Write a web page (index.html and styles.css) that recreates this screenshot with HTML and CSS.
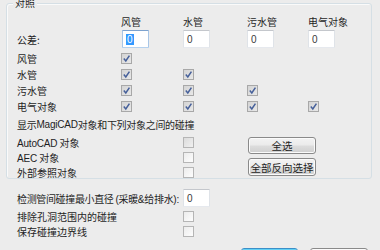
FILE: index.html
```html
<!DOCTYPE html>
<html lang="zh">
<head>
<meta charset="utf-8">
<link rel="stylesheet" href="styles.css">
</head>
<body>
<div class="group">
  <div class="legend">对照</div>
  <div class="row head">
    <span class="lab"></span><span class="c1">风管</span><span class="c2">水管</span><span class="c3">污水管</span><span class="c4">电气对象</span>
  </div>
  <div class="row inp">
    <span class="lab">公差:</span>
    <span class="c1"><span class="tb focus"><span class="sel">0</span></span></span>
    <span class="c2"><span class="tb">0</span></span>
    <span class="c3"><span class="tb">0</span></span>
    <span class="c4"><span class="tb">0</span></span>
  </div>
  <div class="row cbr">
    <span class="lab">风管</span>
    <span class="c1"><span class="cb on"><svg viewBox="0 0 9 9"><path d="M1.8 4.6 L3.8 7 L7.4 1.6"/></svg></span></span>
  </div>
  <div class="row cbr">
    <span class="lab">水管</span>
    <span class="c1"><span class="cb on"><svg viewBox="0 0 9 9"><path d="M1.8 4.6 L3.8 7 L7.4 1.6"/></svg></span></span>
    <span class="c2"><span class="cb on"><svg viewBox="0 0 9 9"><path d="M1.8 4.6 L3.8 7 L7.4 1.6"/></svg></span></span>
  </div>
  <div class="row cbr">
    <span class="lab">污水管</span>
    <span class="c1"><span class="cb on"><svg viewBox="0 0 9 9"><path d="M1.8 4.6 L3.8 7 L7.4 1.6"/></svg></span></span>
    <span class="c2"><span class="cb on"><svg viewBox="0 0 9 9"><path d="M1.8 4.6 L3.8 7 L7.4 1.6"/></svg></span></span>
    <span class="c3"><span class="cb on"><svg viewBox="0 0 9 9"><path d="M1.8 4.6 L3.8 7 L7.4 1.6"/></svg></span></span>
  </div>
  <div class="row cbr">
    <span class="lab">电气对象</span>
    <span class="c1"><span class="cb on"><svg viewBox="0 0 9 9"><path d="M1.8 4.6 L3.8 7 L7.4 1.6"/></svg></span></span>
    <span class="c2"><span class="cb on"><svg viewBox="0 0 9 9"><path d="M1.8 4.6 L3.8 7 L7.4 1.6"/></svg></span></span>
    <span class="c3"><span class="cb on"><svg viewBox="0 0 9 9"><path d="M1.8 4.6 L3.8 7 L7.4 1.6"/></svg></span></span>
    <span class="c4"><span class="cb on"><svg viewBox="0 0 9 9"><path d="M1.8 4.6 L3.8 7 L7.4 1.6"/></svg></span></span>
  </div>
  <div class="row show">显示<span class="lat">MagiCAD</span>对象和下列对象之间的碰撞</div>
  <div class="lower">
    <div class="lcol">
      <div class="lrow"><span class="lab2"><span class="lat">AutoCAD</span> 对象</span><span class="cb hot"></span></div>
      <div class="lrow"><span class="lab2"><span class="lat">AEC</span> 对象</span><span class="cb"></span></div>
      <div class="lrow"><span class="lab2">外部参照对象</span><span class="cb"></span></div>
    </div>
    <div class="bcol">
      <div class="btn b1">全选</div>
      <div class="btn b2">全部反向选择</div>
    </div>
  </div>
</div>
<div class="bottom">
  <div class="brow first"><span class="lab2 tight">检测管间碰撞最小直径 <span class="lat">(</span>采暖<span class="lat">&amp;</span>给排水<span class="lat">):</span></span><span class="tb">0</span></div>
  <div class="brow"><span class="lab2">排除孔洞范围内的碰撞</span><span class="cb"></span></div>
  <div class="brow"><span class="lab2">保存碰撞边界线</span><span class="cb"></span></div>
</div>
<div class="actions">
  <div class="btn act def"></div>
  <div class="btn act"></div>
</div>
</body>
</html>
```
FILE: styles.css
```css
html, body {
  margin: 0;
  padding: 0;
  width: 380px;
  height: 250px;
  overflow: hidden;
  background: #ececec;
  font-family: "Noto Sans CJK SC", "Noto Sans", sans-serif;
  font-size: 10px;
  color: #1e1e1e;
  white-space: nowrap;
}
.lat {
  font-family: "Liberation Sans", "Noto Sans CJK SC", sans-serif;
  letter-spacing: -0.2px;
}
.group {
  box-sizing: border-box;
  margin: 3px 0 0 6px;
  width: 366px;
  height: 176px;
  border: 1px solid #d5dfe5;
  border-radius: 3px;
  box-shadow: inset 1px 1px 0 #fafafa;
  padding-left: 10px;
}
.legend {
  width: fit-content;
  margin: -7px 0 0 -4px;
  padding: 0 2px;
  height: 12px;
  line-height: 12px;
  background: #ececec;
}
.row {
  display: flex;
  align-items: center;
}
.lab { width: 104px; flex: none; }
.c1 { width: 62px; flex: none; }
.c2 { width: 64px; flex: none; }
.c3 { width: 61px; flex: none; }
.c4 { width: 50px; flex: none; }
.head { margin-top: 6px; height: 14px; line-height: 14px; }
.inp { margin-top: 1px; height: 18px; }
.inp .c1 .tb { margin-left: 1px; }
.cbr { height: 16px; }
.cbr:nth-of-type(4) { margin-top: 2px; }
.show { margin-top: 3px; height: 16px; line-height: 16px; letter-spacing: -0.3px; }
.tb {
  box-sizing: border-box;
  display: flex;
  align-items: center;
  width: 27px;
  height: 18px;
  padding-left: 3px;
  background: #fff;
  border: 1px solid;
  border-color: #c4c7cc #dfe3e8 #e6e9ee #dfe3e8;
  border-radius: 1px;
  font-family: "Liberation Sans", sans-serif;
  font-size: 10px;
  color: #3a3a3a;
  flex: none;
}
.tb.focus { border-color: #7da2ce #a9c6e6 #b5d1ee #a9c6e6; }
.sel {
  background: #3399ff;
  color: #fff;
  padding: 0 1px;
  line-height: 11px;
}
.cb {
  box-sizing: border-box;
  display: inline-flex;
  align-items: center;
  justify-content: center;
  width: 11px;
  height: 11px;
  border: 1px solid #b5b5b5;
  background: linear-gradient(135deg, #ececec, #fdfdfd);
  flex: none;
}
.cb.on { background: linear-gradient(135deg, #d4d4d4, #e8e8e8); border-color: #a8a8a8; }
.cb.hot { background: linear-gradient(135deg, #dcdcdc, #f0f0f0); }
.cb svg { width: 9px; height: 9px; }
.cb svg path {
  fill: none;
  stroke: #46609a;
  stroke-width: 1.5;
}
.lower {
  display: flex;
  margin-top: 2px;
}
.lcol { display: flex; flex-direction: column; }
.lrow, .brow {
  display: flex;
  align-items: center;
  height: 15px;
}
.lab2 { width: 166px; flex: none; }
.tight { letter-spacing: -0.35px; }
.bcol {
  margin-left: 54px;
  padding-top: 2px;
  display: flex;
  flex-direction: column;
  gap: 4px;
}
.btn {
  box-sizing: border-box;
  width: 68px;
  height: 17px;
  border: 1px solid #8a8a8a;
  border-radius: 3px;
  background: linear-gradient(#f3f3f3 0%, #ebebeb 48%, #dddddd 52%, #cfcfcf 100%);
  box-shadow: inset 0 0 0 1px #fbfbfb;
  display: flex;
  align-items: center;
  justify-content: center;
  font-size: 10.5px;
}
.b2 { height: 18px; }
.bottom { padding-left: 17px; margin-top: 10px; }
.brow.first { height: 18px; margin-bottom: 2px; }
.actions {
  display: flex;
  justify-content: flex-end;
  gap: 12px;
  padding-right: 12px;
  margin-top: 9px;
}
.act { width: 57px; height: 22px; }
.act + .act { width: 58px; }
.act.def { border-color: #3c8fc8; box-shadow: inset 0 0 0 1px #63d1f5; }
```
